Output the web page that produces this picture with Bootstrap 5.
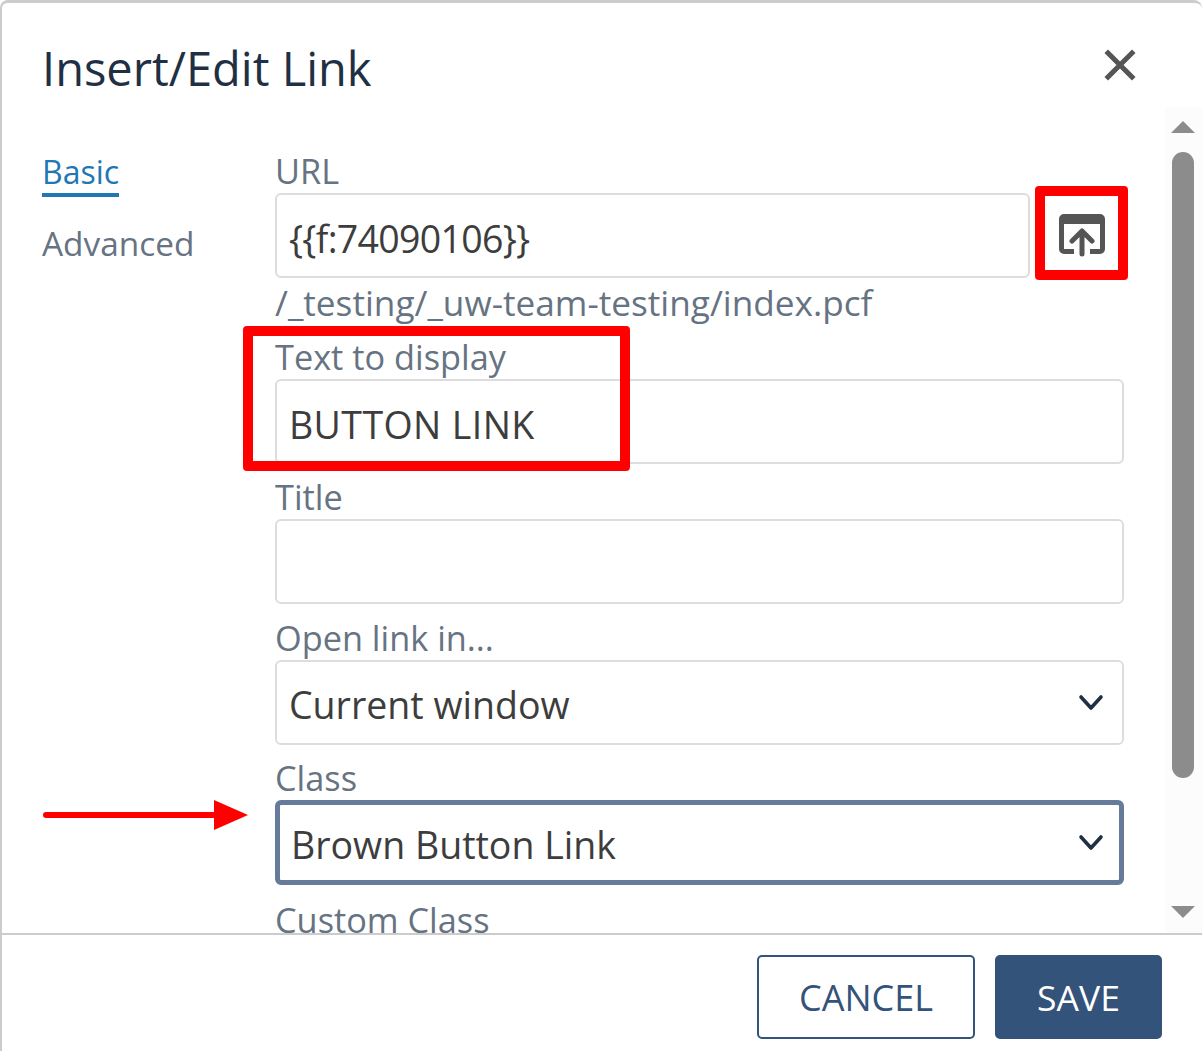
<!DOCTYPE html>
<html lang="en">
<head>
    <meta charset="UTF-8">
    <meta name="viewport" content="width=device-width, initial-scale=1.0">
    <title>Insert/Edit Link</title>
    <link href="https://cdn.jsdelivr.net/npm/bootstrap@5.3.2/dist/css/bootstrap.min.css" rel="stylesheet">
    <style>
        html, body {
            height: 100%;
            overflow: hidden;
        }
        body {
            font-family: "Open Sans", "Noto Sans", sans-serif;
            background: #fff;
        }
        .link-dialog {
            position: relative;
            height: 1051px;
            border-top: 3px solid #ccc;
            border-left: 2px solid #ccc;
            border-top-left-radius: 8px;
            border-top-right-radius: 8px;
        }
        .dialog-head {
            height: 104px;
            padding: 0 66px 0 40px;
        }
        .dialog-title {
            font-size: 47px;
            font-weight: 400;
            color: #1f3044;
            margin: 0;
            padding-top: 26px;
        }
        .dialog-close {
            line-height: 0;
            border: 0;
            background: none;
            padding: 0;
            margin-top: 20px;
        }
        .dialog-main {
            height: 826px;
            overflow: hidden;
        }
        .tab-col {
            width: 273px;
            padding: 45px 0 0 40px;
            flex: none;
        }
        .tab-col .nav-link {
            font-size: 33.4px;
            line-height: 44px;
            padding: 0;
            color: #667382;
            margin-bottom: 29px;
        }
        .tab-col .nav-link.active {
            font-size: 32px;
            color: #1f78b4;
            align-self: flex-start;
            border-bottom: 4px solid #1f78b4;
            line-height: 40px;
            height: 45px;
            margin-bottom: 24px;
        }
        .form-col {
            width: 849px;
            flex: none;
            padding-top: 42px;
        }
        .field-label {
            display: block;
            font-size: 34.3px;
            line-height: 44px;
            color: #667382;
            margin: 0;
        }
        .link-dialog .form-control,
        .link-dialog .form-select {
            height: 85px;
            font-family: inherit;
            font-size: 37.5px;
            color: #3d3d3d;
            padding: 5px 12px 0;
            border: 2px solid #ddd;
            border-radius: 6px;
            box-shadow: none;
        }
        .link-dialog .url-input {
            letter-spacing: -0.7px;
        }
        .link-dialog .caps-input {
            letter-spacing: 0.4px;
        }
        .link-dialog .form-select {
            background-size: 26px 20px;
            background-position: right 18px top calc(50% + 1px);
            background-image: url("data:image/svg+xml,%3csvg xmlns='http://www.w3.org/2000/svg' viewBox='0 0 26 20'%3e%3cpath fill='none' stroke='%231f3044' stroke-width='3.6' stroke-linecap='round' stroke-linejoin='round' d='M3 3l10 11L23 3'/%3e%3c/svg%3e");
        }
        .link-dialog .form-select.is-focus {
            border: 5px solid #667b99;
            padding-left: 11px;
            background-position: right 15px top calc(50% + 1px);
        }
        .browse-btn {
            width: 94px;
            height: 85px;
            border: 0;
            background: none;
            padding: 0 0 0 10px;
            line-height: 0;
        }
        .path-text {
            font-size: 35.2px;
            line-height: 48px;
            color: #667382;
            height: 57px;
        }
        .gap-title {
            margin-top: 11px;
        }
        .gap-field {
            margin-top: 12px;
        }
        .gap-class {
            margin-top: 11px;
        }
        .gap-custom {
            margin-top: 13px;
        }
        .fake-scroll {
            width: 37px;
            margin-left: 41px;
            flex: none;
            background: #fcfcfc;
        }
        .scroll-up {
            width: 0;
            height: 0;
            border-left: 12px solid transparent;
            border-right: 12px solid transparent;
            border-bottom: 12px solid #8c8c8c;
            margin: 14px 0 0 6px;
        }
        .scroll-down {
            width: 0;
            height: 0;
            border-left: 12px solid transparent;
            border-right: 12px solid transparent;
            border-top: 12px solid #8c8c8c;
            margin: 128px 0 0 6px;
        }
        .scroll-thumb {
            width: 22px;
            height: 626px;
            margin: 19px 0 0 7px;
            border-radius: 11px;
            background: #8c8c8c;
        }
        .dialog-foot {
            border-top: 2px solid #ccc;
            padding: 20px 40px 0 0;
            gap: 20px;
        }
        .foot-btn {
            height: 84px;
            font-size: 35.5px;
            border-radius: 5px;
            padding: 2px 0 0;
            border: 2px solid #33537a;
        }
        .foot-cancel {
            width: 218px;
            font-size: 36px;
            color: #33537a;
            background: #fff;
        }
        .foot-save {
            width: 167px;
            color: #fff;
            background: #33537a;
        }
        .red-box {
            position: absolute;
            border: 10px solid #f00;
            border-radius: 4px;
            pointer-events: none;
        }
        .red-box-browse {
            left: 1033px;
            top: 183px;
            width: 93px;
            height: 94px;
        }
        .red-box-text {
            left: 241px;
            top: 323px;
            width: 387px;
            height: 145px;
        }
        .red-arrow {
            position: absolute;
            left: 41px;
            top: 794px;
        }
    </style>
</head>
<body>
    <div class="link-dialog d-flex flex-column">
        <div class="dialog-head d-flex justify-content-between align-items-center">
            <h1 class="dialog-title">Insert/Edit Link</h1>
            <button class="dialog-close" type="button" aria-label="Close">
                <svg width="32" height="32" viewBox="0 0 32 32"><path d="M4 4l24 24M28 4L4 28" stroke="#555" stroke-width="5" stroke-linecap="square"/></svg>
            </button>
        </div>

        <div class="dialog-main d-flex">
            <nav class="tab-col nav flex-column">
                <a class="nav-link active" href="#">Basic</a>
                <a class="nav-link" href="#">Advanced</a>
            </nav>

            <form class="form-col">
                <label class="field-label">URL</label>
                <div class="d-flex">
                    <input class="form-control url-input flex-grow-1" value="{{f:74090106}}">
                    <button class="browse-btn flex-shrink-0" type="button" aria-label="Browse">
                        <svg width="46" height="44" viewBox="0 0 46 44">
                            <path d="M5 0h36a5 5 0 0 1 5 5v30a5 5 0 0 1-5 5H31v-5h10V10H5v25h10v5H5a5 5 0 0 1-5-5V5a5 5 0 0 1 5-5z" fill="#555"/>
                            <path d="M23 40V17M13 27l10-10 10 10" fill="none" stroke="#555" stroke-width="5" stroke-linecap="round" stroke-linejoin="round"/>
                        </svg>
                    </button>
                </div>
                <div class="path-text">/_testing/_uw-team-testing/index.pcf</div>

                <label class="field-label">Text to display</label>
                <input class="form-control caps-input" value="BUTTON LINK">

                <label class="field-label gap-title">Title</label>
                <input class="form-control" value="">

                <label class="field-label gap-field">Open link in...</label>
                <select class="form-select">
                    <option>Current window</option>
                </select>

                <label class="field-label gap-class">Class</label>
                <select class="form-select is-focus">
                    <option>Brown Button Link</option>
                </select>

                <label class="field-label gap-custom">Custom Class</label>
                <input class="form-control" value="">
            </form>

            <div class="fake-scroll">
                <div class="scroll-up"></div>
                <div class="scroll-thumb"></div>
                <div class="scroll-down"></div>
            </div>
        </div>

        <div class="dialog-foot d-flex justify-content-end">
            <button class="btn foot-btn foot-cancel" type="button">CANCEL</button>
            <button class="btn foot-btn foot-save" type="button">SAVE</button>
        </div>

        <div class="red-box red-box-browse"></div>
        <div class="red-box red-box-text"></div>
        <svg class="red-arrow" width="208" height="36" viewBox="0 0 208 36">
            <path d="M3 18h172" stroke="#f00" stroke-width="6" stroke-linecap="round"/>
            <path d="M171 3l34 15-34 15z" fill="#f00"/>
        </svg>
    </div>

    <script src="https://cdn.jsdelivr.net/npm/bootstrap@5.3.2/dist/js/bootstrap.bundle.min.js"></script>
</body>
</html>
